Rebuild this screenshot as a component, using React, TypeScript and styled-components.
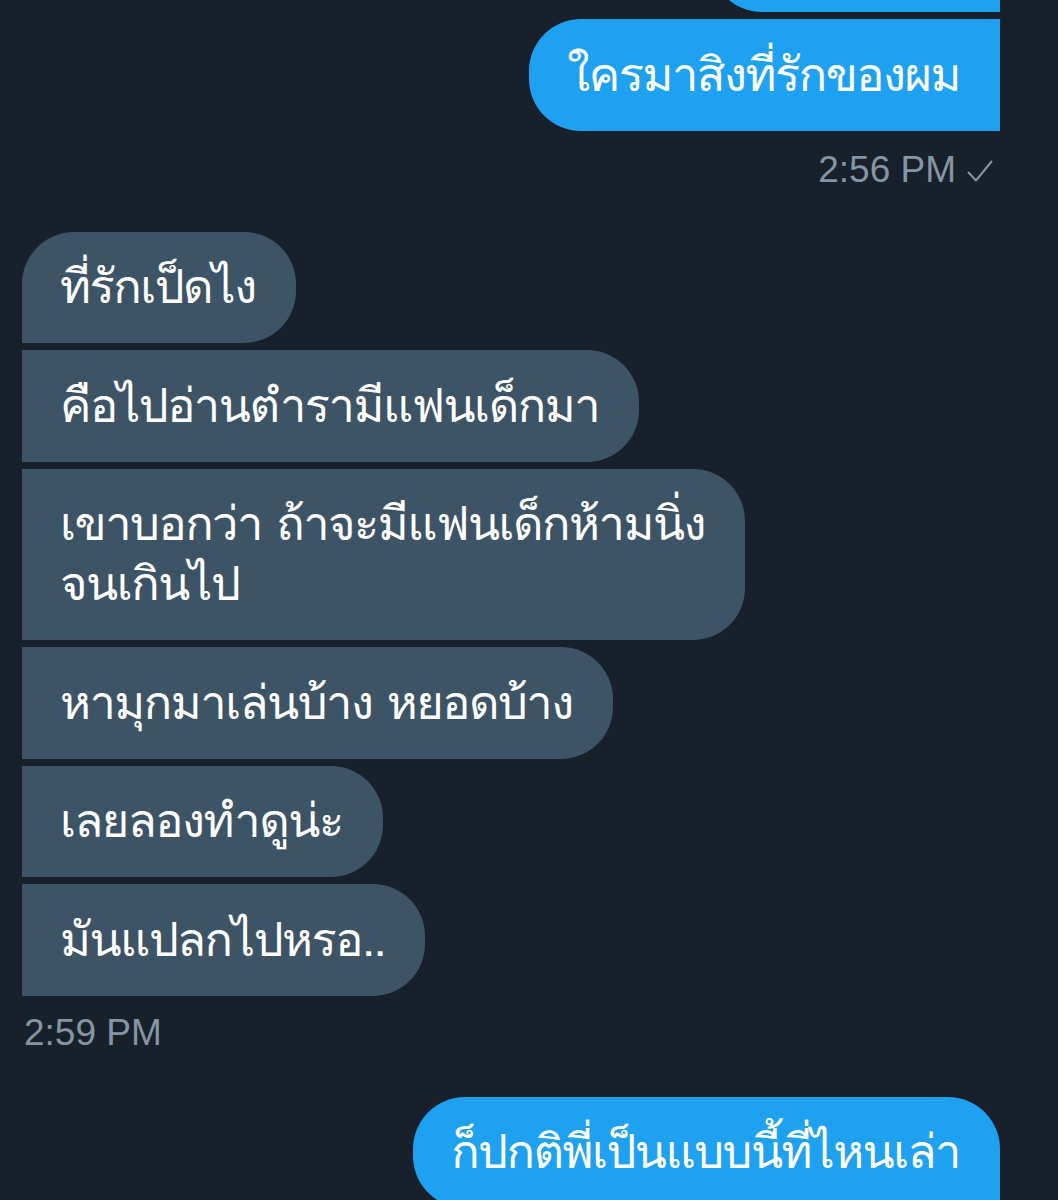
import styled, { createGlobalStyle, css } from 'styled-components';

const GlobalStyle = createGlobalStyle`
	html, body {
		margin: 0;
		padding: 0;
		background: #17202b;
	}
	body {
		height: 1200px;
		overflow: hidden;
		font-family: 'Loma', 'Garuda', 'Noto Sans Thai', 'Noto Sans', 'Liberation Sans', sans-serif;
	}
`;

type Side = 'in' | 'out';
type Corners = { tl?: boolean; tr?: boolean; br?: boolean; bl?: boolean };

const messages: { side: Side; text: string; corners: Corners }[] = [
	{ side: 'in', text: 'ที่รักเป็ดไง', corners: { tl: true, tr: true, br: true } },
	{ side: 'in', text: 'คือไปอ่านตำรามีแฟนเด็กมา', corners: { tr: true, br: true } },
	{
		side: 'in',
		text: 'เขาบอกว่า ถ้าจะมีแฟนเด็กห้ามนิ่ง\nจนเกินไป',
		corners: { tr: true, br: true },
	},
	{ side: 'in', text: 'หามุกมาเล่นบ้าง หยอดบ้าง', corners: { tr: true, br: true } },
	{ side: 'in', text: 'เลยลองทำดูน่ะ', corners: { tr: true, br: true } },
	{ side: 'in', text: 'มันแปลกไปหรอ..', corners: { tr: true, br: true } },
];

export default function App() {
	return (
		<>
			<GlobalStyle />
			<Thread>
				<Group side='out'>
					<Bubble side='out' corners={{ bl: true }} $minWidth={290}>
						&nbsp;
					</Bubble>
					<Bubble side='out' corners={{ tl: true, bl: true }}>
						ใครมาสิงที่รักของผม
					</Bubble>
				</Group>
				<Stamp side='out'>
					2:56 PM
					<Check viewBox='0 0 26 24' fill='none'>
						<polyline
							points='1.5,13.5 9,21.5 24.5,2.5'
							stroke='#8595a3'
							strokeWidth='2'
							strokeLinecap='round'
							strokeLinejoin='round'
						/>
					</Check>
				</Stamp>

				<Group side='in'>
					{messages.map((m, i) => (
						<Bubble key={i} side={m.side} corners={m.corners}>
							{m.text}
						</Bubble>
					))}
				</Group>
				<Stamp side='in'>2:59 PM</Stamp>

				<Group side='out'>
					<Bubble side='out' corners={{ tl: true, tr: true, bl: true }}>
						ก็ปกติพี่เป็นแบบนี้ที่ไหนเล่า
					</Bubble>
				</Group>
			</Thread>
		</>
	);
}

const Thread = styled.div`
	display: flex;
	flex-direction: column;
	margin-top: -99.5px;
	padding: 0 58px 0 22px;
`;

const Group = styled.div<{ side: Side }>`
	display: flex;
	flex-direction: column;
	gap: 7px;
	align-items: ${(p) => (p.side === 'out' ? 'flex-end' : 'flex-start')};
`;

const R = 52;

const Bubble = styled.div<{ side: Side; corners: Corners; $minWidth?: number }>`
	box-sizing: border-box;
	min-height: 111.5px;
	min-width: ${(p) => (p.$minWidth ? `${p.$minWidth}px` : 'auto')};
	padding: 25.5px 40px 26px 38px;
	font-size: 47px;
	letter-spacing: -1.5px;
	line-height: 60px;
	color: #ffffff;
	white-space: pre-line;
	background: ${(p) => (p.side === 'out' ? '#1fa1f1' : '#3d5467')};
	${(p) => css`
		border-radius: ${p.corners.tl ? R : 0}px ${p.corners.tr ? R : 0}px
			${p.corners.br ? R : 0}px ${p.corners.bl ? R : 0}px;
	`}
`;

const Stamp = styled.div<{ side: Side }>`
	display: flex;
	align-items: center;
	gap: 11px;
	align-self: ${(p) => (p.side === 'out' ? 'flex-end' : 'flex-start')};
	margin: ${(p) => (p.side === 'out' ? '17px 7px 40px 0' : '15px 0 42px 2px')};
	font-family: 'Liberation Sans', Arial, sans-serif;
	font-size: 37px;
	line-height: 44px;
	color: #8595a3;
`;

const Check = styled.svg`
	width: 26px;
	height: 24px;
	margin-top: 2px;
`;
